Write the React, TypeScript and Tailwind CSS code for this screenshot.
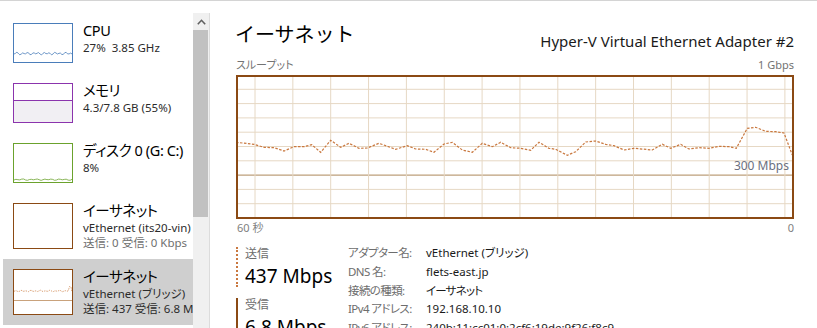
const font = "font-['Noto_Sans','Noto_Sans_CJK_JP',sans-serif]";

const mainLine =
  "237,143.3 255,145.3 265,148.3 275,148.7 285,152 295,147.7 305,147.7 312.7,145.7 321.7,153.3 331.7,141.3 341.7,148.3 350,144.3 360,149.3 368.3,149 380,144.3 396.7,150.3 408.3,146.7 416.7,150 426.7,150.3 435,153.3 445,145 453.3,143.3 463.3,151 473.3,153.3 483.3,144.3 493.3,147.7 501.7,143.3 511.7,148.7 521.7,149.3 531.7,151.3 540,143.3 550,149.3 556.7,150.3 568.3,156.3 576.7,152.7 586.7,143 596.7,142 606.7,145.3 615,146.7 625,151 635,149.3 653.3,151 663.3,145.3 671.7,149.3 681.7,145.3 690,150 700,148.7 710,149.3 720,147.3 730,147.7 737.3,149.3 748.3,129.3 756.7,128.3 766.7,132.3 776.7,132.7 785,134 793.3,156";

const vLines = Array.from({ length: 15 }, (_, i) => 256 + i * 37.85);
const hLines = Array.from({ length: 9 }, (_, i) => 76 + (i + 1) * 14.3);

function wiggle(n: number, base: number, amp: number, seed: number) {
  const out: string[] = [];
  for (let i = 0; i <= n; i++) {
    const x = (i * 58) / n;
    const y = base + Math.sin(i * 1.7 + seed) * amp + Math.cos(i * 0.9 + seed * 2) * amp * 0.6;
    out.push(`${x.toFixed(1)},${y.toFixed(1)}`);
  }
  return out.join(" ");
}

function CpuThumb() {
  return (
    <div className="h-[40px] w-[60px] border border-[#4a7dba] bg-white">
      <svg width="58" height="38" viewBox="0 0 58 38">
        <polyline points={wiggle(40, 29.5, 0.9, 1)} fill="none" stroke="#4a7dba" strokeWidth="0.8" />
      </svg>
    </div>
  );
}

function MemThumb() {
  return (
    <div className="flex h-[40px] w-[60px] flex-col border border-[#8b34ad] bg-white">
      <div className="h-[17px] border-b border-[#8b34ad]" />
      <div className="flex-1 bg-[#f1eff3]" />
    </div>
  );
}

function DiskThumb() {
  return (
    <div className="h-[40px] w-[60px] border border-[#6ba22d] bg-white">
      <svg width="58" height="38" viewBox="0 0 58 38">
        <polyline points={wiggle(30, 35.6, 0.5, 3)} fill="none" stroke="#6ba22d" strokeWidth="0.8" />
      </svg>
    </div>
  );
}

function NetThumb({ active }: { active?: boolean }) {
  return (
    <div className="h-[46px] w-[60px] border border-[#8b4a14] bg-white">
      {active && (
        <svg width="58" height="44" viewBox="0 0 58 44">
          <line x1="0" y1="30.5" x2="58" y2="30.5" stroke="#c9a27c" strokeWidth="1" />
          <polyline
            points={wiggle(44, 21, 0.5, 2).split(" ").slice(0, 42).join(" ") + " 54.5,20 55.5,16.5 57,17 58,22"}
            fill="none"
            stroke="#d08a55"
            strokeWidth="0.8"
            strokeDasharray="1.5 1"
          />
        </svg>
      )}
    </div>
  );
}

function Item({
  thumb,
  title,
  lines,
  tall,
  selected,
}: {
  thumb: React.ReactNode;
  title: string;
  lines: { text: string; muted?: boolean }[];
  tall?: boolean;
  selected?: boolean;
}) {
  return (
    <div
      className={`ml-[3px] flex w-[190px] gap-[10px] overflow-hidden pl-[10px] pt-[10px] ${tall ? "h-[66px]" : "h-[60px]"} ${selected ? "bg-[#cfcfcf]" : ""}`}
    >
      {thumb}
      <div className="flex min-w-0 flex-col whitespace-pre">
        <span className="-mt-[3px] text-[14.5px] leading-[20px] tracking-[-0.4px] text-black">{title}</span>
        {lines.map((l, i) => (
          <span
            key={i}
            className={`text-[11.5px] leading-[15px] ${l.muted ? "text-[#6f6f6f]" : "text-[#2b2b2b]"}`}
          >
            {l.text}
          </span>
        ))}
      </div>
    </div>
  );
}

const label = "text-[11.5px] tracking-[-0.6px] text-[#6d6d6d]";
const value = "text-[11.5px] text-[#1a1a1a]";

export default function App() {
  return (
    <div className={`flex h-[328px] w-[817px] flex-col overflow-hidden bg-white ${font} [font-feature-settings:'palt']`}>
      {/* tab strip edge */}
      <div className="flex h-[2px] w-full border-b border-[#d4d4d4]">
        <div className="ml-[1px] w-[30px] border-x border-[#c8c8c8]" />
        <div className="ml-[48px] w-[45px] border-x border-[#c8c8c8]" />
        <div className="w-[46px] border-r border-[#c8c8c8]" />
        <div className="w-[31px] border-r border-[#c8c8c8]" />
        <div className="w-[23px] border-r border-[#c8c8c8]" />
        <div className="w-[29px] border-r border-[#c8c8c8]" />
      </div>

      <div className="flex flex-1">
        {/* left list */}
        <div className="flex w-[194px] flex-col pt-[12px]">
          <Item thumb={<CpuThumb />} title="CPU" lines={[{ text: "27%  3.85 GHz" }]} />
          <Item thumb={<MemThumb />} title="メモリ" lines={[{ text: "4.3/7.8 GB (55%)" }]} />
          <Item thumb={<DiskThumb />} title="ディスク 0 (G: C:)" lines={[{ text: "8%" }]} />
          <Item
            thumb={<NetThumb />}
            title="イーサネット"
            tall
            lines={[{ text: "vEthernet (its20-vin)" }, { text: "送信: 0 受信: 0 Kbps", muted: true }]}
          />
          <Item
            thumb={<NetThumb active />}
            title="イーサネット"
            tall
            selected
            lines={[{ text: "vEthernet (ブリッジ)" }, { text: "送信: 437 受信: 6.8 Mbps" }]}
          />
        </div>

        {/* scrollbar */}
        <div className="mt-[12px] flex w-[17px] flex-col border-r border-[#dcdcdc] bg-[#f0f0f0]">
          <div className="flex h-[17px] items-center justify-center">
            <svg width="9" height="6" viewBox="0 0 9 6">
              <path d="M0.8 5.2 L4.5 1.3 L8.2 5.2" fill="none" stroke="#606060" strokeWidth="1.6" />
            </svg>
          </div>
          <div className="h-[187px] w-[15px] bg-[#c1c1c1]" />
        </div>

        {/* right panel */}
        <div className="flex flex-1 flex-col pl-[26px] pr-[23px]">
          <div className="flex h-[50px] items-end justify-between">
            <span className="-ml-[1px] mb-[2px] text-[20px] leading-[28px] text-black [font-feature-settings:normal]">
              イーサネット
            </span>
            <span className="text-[15px] leading-[20px] text-[#1a1a1a]">
              Hyper-V Virtual Ethernet Adapter #2
            </span>
          </div>
          <div className="mt-[6px] flex h-[16px] items-center justify-between text-[11px] leading-[16px] text-[#737373]">
            <span>スループット</span>
            <span>1 Gbps</span>
          </div>
          <div className="relative mt-[2px] h-[144px] w-[558px] border-2 border-[#8b4a14]">
            <svg width="554" height="140" viewBox="239 78 554 140" className="block">
              {hLines.map((y, i) => (
                <line
                  key={`h${i}`}
                  x1="239"
                  x2="793"
                  y1={y}
                  y2={y}
                  stroke={i === 6 ? "#bd9f7b" : "#e6d8c4"}
                  strokeWidth={i === 6 ? 1.3 : 1}
                />
              ))}
              {vLines.map((x, i) => (
                <line key={`v${i}`} x1={x} x2={x} y1="78" y2="218" stroke="#e6d8c4" strokeWidth="1" />
              ))}
              <polyline
                points={mainLine}
                fill="none"
                stroke="#c9783f"
                strokeWidth="1.2"
                strokeDasharray="2.5 1.5"
              />
            </svg>
            <span className="absolute right-[3px] top-[81px] text-[12px] leading-[16px] text-[#6b6f80]">
              300 Mbps
            </span>
          </div>
          <div className="flex h-[17px] items-center justify-between text-[11px] leading-[16px] text-[#808080]">
            <span className="ml-[1px]">60 秒</span>
            <span>0</span>
          </div>

          <div className="mt-[11px] flex">
            <div className="flex w-[112px] flex-col">
              <div className="flex flex-col border-l-2 border-dotted border-[#c9783f] pl-[7px]">
                <span className="text-[12px] leading-[14px] text-[#6d6d6d]">送信</span>
                <span className="mt-[4px] text-[19px] leading-[22px] text-black">437 Mbps</span>
              </div>
              <div className="mt-[11px] flex flex-col border-l-2 border-[#8b4a14] pl-[7px]">
                <span className="text-[12px] leading-[14px] text-[#6d6d6d]">受信</span>
                <span className="mt-[4px] text-[19px] leading-[22px] text-black">6.8 Mbps</span>
              </div>
            </div>
            <div className="-mt-[3px] grid grid-cols-[78px_1fr] leading-[18px]">
              <span className={label}>アダプター名:</span>
              <span className={value}>vEthernet (ブリッジ)</span>
              <span className={label}>DNS 名:</span>
              <span className={value}>flets-east.jp</span>
              <span className={label}>接続の種類:</span>
              <span className={`${value} tracking-[-0.8px]`}>イーサネット</span>
              <span className={label}>IPv4 アドレス:</span>
              <span className={value}>192.168.10.10</span>
              <span className={label}>IPv6 アドレス:</span>
              <span className={value}>240b:11:cc01:0:2cf6:19de:9f26:f8c9</span>
            </div>
          </div>
        </div>
      </div>
    </div>
  );
}
